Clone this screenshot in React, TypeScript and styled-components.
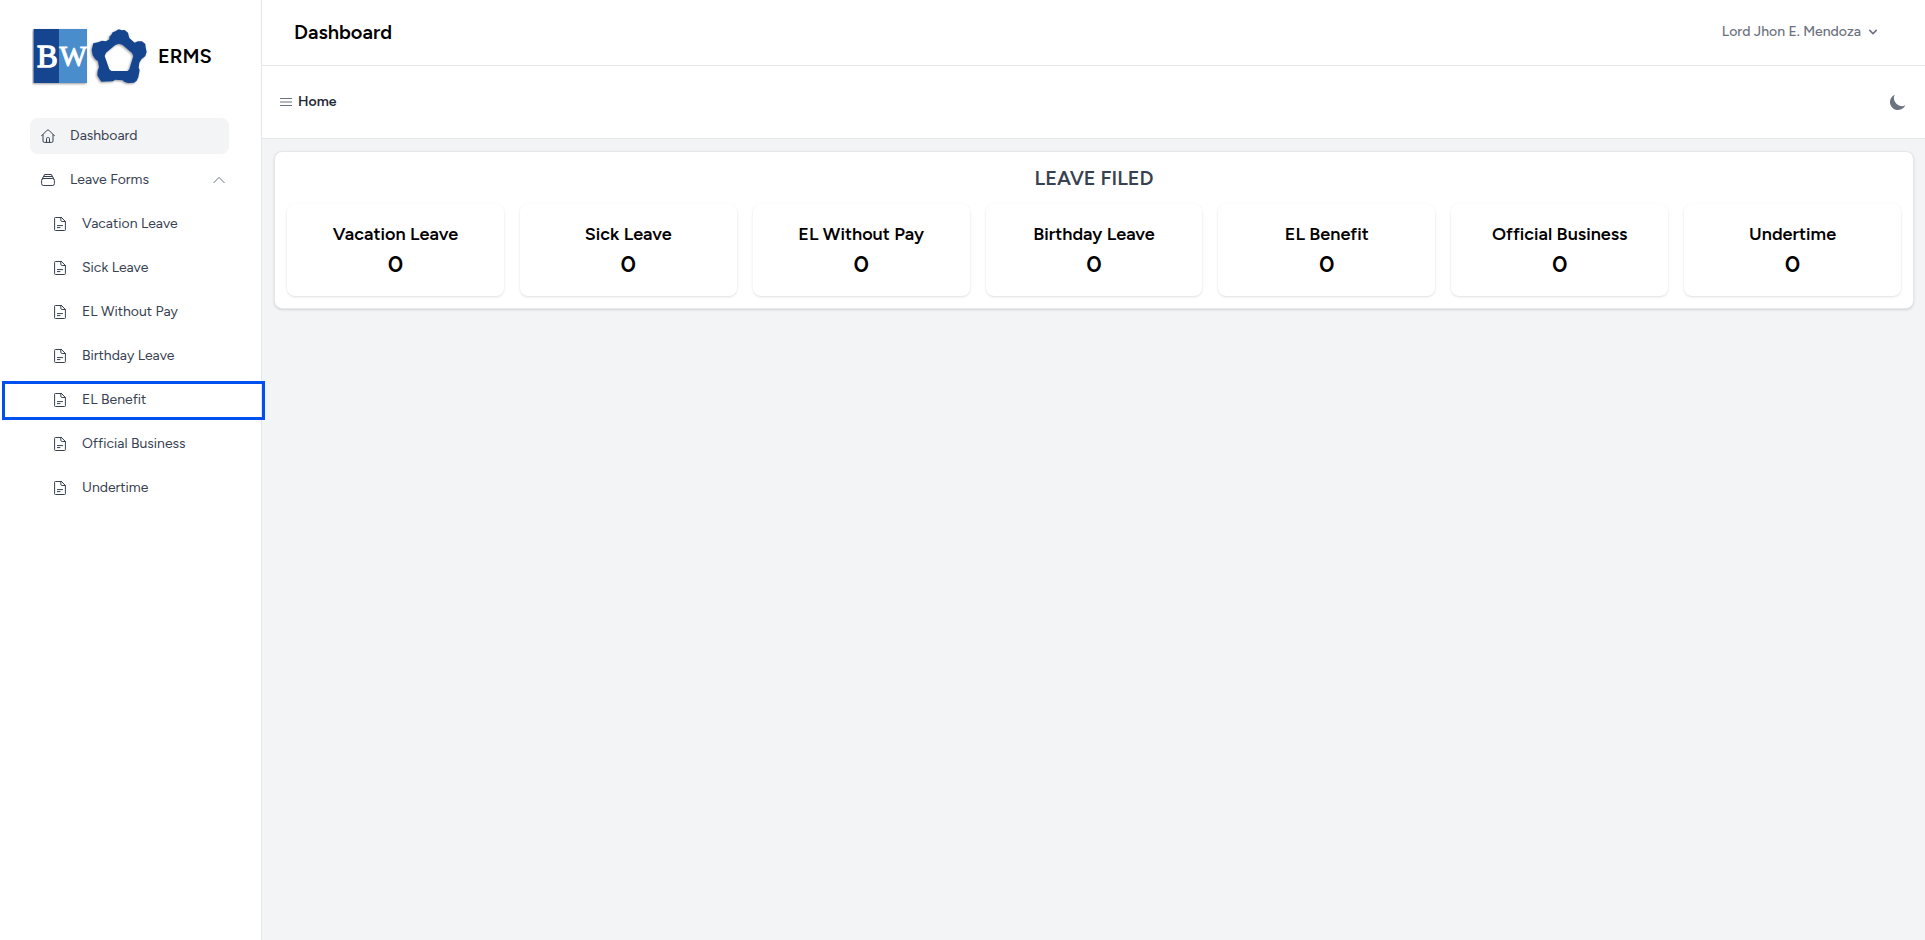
import React from 'react';
import styled, { createGlobalStyle, css } from 'styled-components';

const color = {
  line: '#e5e7eb',
  surface: '#ffffff',
  canvas: '#f3f4f6',
  ink: '#000000',
  text: '#374151',
  muted: '#6b7280',
  focus: '#0050f0',
  brandDark: '#18458f',
  brandLight: '#4a8dcc',
};

const GlobalStyle = createGlobalStyle`
  *, *::before, *::after { box-sizing: border-box; }
  body {
    margin: 0;
    background: ${color.canvas};
    color: ${color.ink};
    font-family: Figtree, "Liberation Sans", sans-serif;
    font-size: 14px;
    line-height: 20px;
  }
  h1, h2, h3, p, ul { margin: 0; padding: 0; }
  ul { list-style: none; }
  a { color: inherit; text-decoration: none; }
  button {
    padding: 0;
    border: 0;
    background: none;
    color: inherit;
    font: inherit;
    cursor: pointer;
  }
  svg { display: block; flex-shrink: 0; }
`;

const Shell = styled.div`
  display: flex;
  min-height: 100vh;
`;

const Sidebar = styled.aside`
  flex: 0 0 262px;
  padding-top: 28px;
  background: ${color.surface};
  border-right: 1px solid ${color.line};
`;

const Brand = styled.a`
  display: flex;
  align-items: center;
  gap: 10px;
  margin-bottom: 32px;
  padding-left: 32px;
`;

const BrandName = styled.span`
  padding-bottom: 2px;
  font-size: 20px;
  line-height: 28px;
  font-weight: 600;
`;

const NavList = styled.ul`
  display: flex;
  flex-direction: column;
  gap: 8px;
  padding: 0 32px 0 30px;
  color: ${color.text};
`;

const SubList = styled.ul`
  display: flex;
  flex-direction: column;
  gap: 8px;
  margin-top: 8px;
`;

const itemBox = css`
  display: flex;
  align-items: center;
  gap: 15px;
  width: 100%;
  height: 36px;
  border-radius: 8px;
  text-align: left;
`;

const NavLink = styled.a<{ $active?: boolean }>`
  ${itemBox}
  padding: 0 12px 0 11px;
  background: ${(p) => (p.$active ? color.canvas : 'transparent')};
`;

const NavToggle = styled.button`
  ${itemBox}
  padding: 0 4px 0 11px;
`;

const ToggleLabel = styled.span`
  flex: 1;
`;

const SubLink = styled.a`
  ${itemBox}
  gap: 16px;
  padding: 0 12px 0 24px;
`;

const SubItem = styled.li<{ $highlighted?: boolean }>`
  position: relative;
  ${(p) =>
    p.$highlighted &&
    css`
      &::after {
        content: '';
        position: absolute;
        inset: -1px -36px -2px -28px;
        border: 3px solid ${color.focus};
        pointer-events: none;
        z-index: 1;
      }
    `}
`;

const Main = styled.div`
  flex: 1;
  min-width: 0;
`;

const Header = styled.header`
  display: flex;
  align-items: center;
  justify-content: space-between;
  height: 66px;
  padding: 0 44px 2px 32px;
  background: ${color.surface};
  border-bottom: 1px solid ${color.line};
`;

const PageTitle = styled.h1`
  font-size: 20px;
  line-height: 28px;
  font-weight: 600;
`;

const UserMenu = styled.button`
  display: flex;
  align-items: center;
  gap: 4px;
  color: ${color.muted};
  font-weight: 500;
`;

const Toolbar = styled.div`
  display: flex;
  align-items: center;
  justify-content: space-between;
  height: 73px;
  padding: 0 17px 0 18px;
  background: ${color.surface};
  border-bottom: 1px solid ${color.line};
  color: ${color.muted};
`;

const Crumbs = styled.nav`
  display: flex;
  align-items: center;
  gap: 6px;
`;

const Crumb = styled.a`
  color: #1f2937;
  font-weight: 600;
`;

const Panel = styled.section`
  margin: 12px 11px 12px 12px;
  padding: 12px;
  background: ${color.surface};
  border: 1px solid ${color.line};
  border-radius: 8px;
  box-shadow: 0 1px 3px rgba(0, 0, 0, 0.1), 0 1px 2px -1px rgba(0, 0, 0, 0.1);
`;

const PanelTitle = styled.h2`
  margin-bottom: 12px;
  color: ${color.text};
  font-size: 20px;
  line-height: 28px;
  font-weight: 600;
  text-align: center;
`;

const StatGrid = styled.div`
  display: grid;
  grid-template-columns: repeat(7, minmax(0, 1fr));
  gap: 16px;
`;

const StatCard = styled.article`
  padding: 16px;
  border-radius: 8px;
  box-shadow: 0 1px 3px rgba(0, 0, 0, 0.1), 0 1px 2px -1px rgba(0, 0, 0, 0.1);
  text-align: center;
`;

const StatLabel = styled.h3`
  font-size: 18px;
  line-height: 28px;
  font-weight: 600;
`;

const StatValue = styled.p`
  font-size: 24px;
  line-height: 32px;
  font-weight: 600;
`;

function Logo() {
  return (
    <svg width="116" height="58" viewBox="0 0 116 58" role="img" aria-label="BW">
      <defs>
        <filter id="lift" x="-10%" y="-10%" width="120%" height="120%">
          <feDropShadow dx="-1" dy="1" stdDeviation="1" floodColor="#000" floodOpacity="0.4" />
        </filter>
      </defs>
      <g filter="url(#lift)">
        <rect x="1.6" y="1" width="53.4" height="54" fill={color.brandDark} />
        <rect x="27" y="1" width="28" height="54" fill={color.brandLight} />
      </g>
      <g fill="#fff" stroke="#fff" fontFamily='"Liberation Serif", serif'>
        <text x="5" y="38.5" fontSize="31" fontWeight="400" strokeWidth="1.3">B</text>
        <text x="27.4" y="37.5" fontSize="29" fontWeight="400" strokeWidth="1">W</text>
      </g>
      <g filter="url(#lift)">
        <path
          transform="translate(-32 -28) scale(0.33333)"
          fill={color.brandDark}
          fillRule="evenodd"
          d="M346 94L356 88L366 91L374 90L384 98L388 114L404 128L414 124L426 124L436 132L437 142L440 156L436 168L424 178L418 188L416 203L419 210L415 232L410 242L402 248L384 249L374 246L368 241L346 239L338 244L304 245L298 236L292 226L293 212L297 202L294 184L286 178L278 166L275 150L280 130L294 127L306 122L318 124L328 118L328 110L334 104L338 97ZM357 131L346 135L318 158L314 168L328 208L334 213L383 213L388 208L400 168L396 159L368 135Z"
        />
      </g>
    </svg>
  );
}

const stroke = {
  fill: 'none',
  stroke: 'currentColor',
  strokeLinecap: 'round' as const,
  strokeLinejoin: 'round' as const,
};

function HomeIcon() {
  return (
    <svg width="14" height="14" viewBox="0 0 14 14" aria-hidden="true" {...stroke}>
      <path d="M0.6 6.8L6.2 1.2Q7 0.4 7.8 1.2L13.4 6.8M2 5.8V12Q2 13.4 3.4 13.4H10.6Q12 13.4 12 12V5.8M5.5 13.2V9.6Q5.5 8.6 6.3 8.6H7.7Q8.5 8.6 8.5 9.6V13.2" />
    </svg>
  );
}

function StackIcon() {
  return (
    <svg width="14" height="14" viewBox="0 0 14 14" aria-hidden="true" {...stroke}>
      <path d="M4 1.5H10M2.6 3.5Q2.8 1.5 4 1.5M10 1.5Q11.2 1.5 11.4 3.5M2.6 3.5H11.4" />
      <rect x="0.6" y="5.5" width="12.8" height="7" rx="1.8" />
      <path d="M1.2 6Q1.4 3.6 2.8 3.5M12.8 6Q12.6 3.6 11.2 3.5" />
    </svg>
  );
}

function FileIcon() {
  return (
    <svg width="12" height="14" viewBox="0 0 12 14" aria-hidden="true" {...stroke}>
      <path d="M7.5 0.5H1.4Q0.6 0.5 0.6 1.3V12.7Q0.6 13.5 1.4 13.5H10.6Q11.4 13.5 11.4 12.7V4.5L7.5 0.5M6.8 0.8V3.2Q6.8 4.5 8.2 4.5H11.2M3.4 8.6H8.6M3.4 10.6H6" />
    </svg>
  );
}

function ChevronUpIcon() {
  return (
    <svg width="12" height="8" viewBox="0 0 12 8" aria-hidden="true" {...stroke} stroke={color.muted}>
      <path d="M0.8 6.7L6 1.4L11.2 6.7" />
    </svg>
  );
}

function ChevronDownIcon() {
  return (
    <svg width="16" height="16" viewBox="0 0 20 20" fill="currentColor" aria-hidden="true">
      <path
        fillRule="evenodd"
        clipRule="evenodd"
        d="M5.293 7.293a1 1 0 011.414 0L10 10.586l3.293-3.293a1 1 0 111.414 1.414l-4 4a1 1 0 01-1.414 0l-4-4a1 1 0 010-1.414z"
      />
    </svg>
  );
}

function MenuIcon() {
  return (
    <svg width="12" height="10" viewBox="0 0 12 10" aria-hidden="true" stroke="currentColor">
      <path d="M0 1.5H12M0 5H12M0 8.5H12" />
    </svg>
  );
}

function MoonIcon() {
  return (
    <svg width="20" height="20" viewBox="0 0 20 20" fill="currentColor" aria-hidden="true">
      <path d="M17.293 13.293A8 8 0 016.707 2.707a8.001 8.001 0 1010.586 10.586z" />
    </svg>
  );
}

const leaveTypes = [
  { name: 'Vacation Leave', filed: 0 },
  { name: 'Sick Leave', filed: 0 },
  { name: 'EL Without Pay', filed: 0 },
  { name: 'Birthday Leave', filed: 0 },
  { name: 'EL Benefit', filed: 0, highlighted: true },
  { name: 'Official Business', filed: 0 },
  { name: 'Undertime', filed: 0 },
];

export default function App() {
  return (
    <>
      <GlobalStyle />
      <Shell>
        <Sidebar>
          <Brand href="#home">
            <Logo />
            <BrandName>ERMS</BrandName>
          </Brand>
          <nav aria-label="Main">
            <NavList>
              <li>
                <NavLink href="#dashboard" $active aria-current="page">
                  <HomeIcon />
                  Dashboard
                </NavLink>
              </li>
              <li>
                <NavToggle type="button" aria-expanded="true">
                  <StackIcon />
                  <ToggleLabel>Leave Forms</ToggleLabel>
                  <ChevronUpIcon />
                </NavToggle>
                <SubList>
                  {leaveTypes.map((leave) => (
                    <SubItem key={leave.name} $highlighted={leave.highlighted}>
                      <SubLink href="#leave">
                        <FileIcon />
                        {leave.name}
                      </SubLink>
                    </SubItem>
                  ))}
                </SubList>
              </li>
            </NavList>
          </nav>
        </Sidebar>
        <Main>
          <Header>
            <PageTitle>Dashboard</PageTitle>
            <UserMenu type="button">
              Lord Jhon E. Mendoza
              <ChevronDownIcon />
            </UserMenu>
          </Header>
          <Toolbar>
            <Crumbs aria-label="Breadcrumb">
              <button type="button" aria-label="Toggle menu">
                <MenuIcon />
              </button>
              <Crumb href="#home">Home</Crumb>
            </Crumbs>
            <button type="button" aria-label="Dark mode">
              <MoonIcon />
            </button>
          </Toolbar>
          <Panel>
            <PanelTitle>LEAVE FILED</PanelTitle>
            <StatGrid>
              {leaveTypes.map((leave) => (
                <StatCard key={leave.name}>
                  <StatLabel>{leave.name}</StatLabel>
                  <StatValue>{leave.filed}</StatValue>
                </StatCard>
              ))}
            </StatGrid>
          </Panel>
        </Main>
      </Shell>
    </>
  );
}
